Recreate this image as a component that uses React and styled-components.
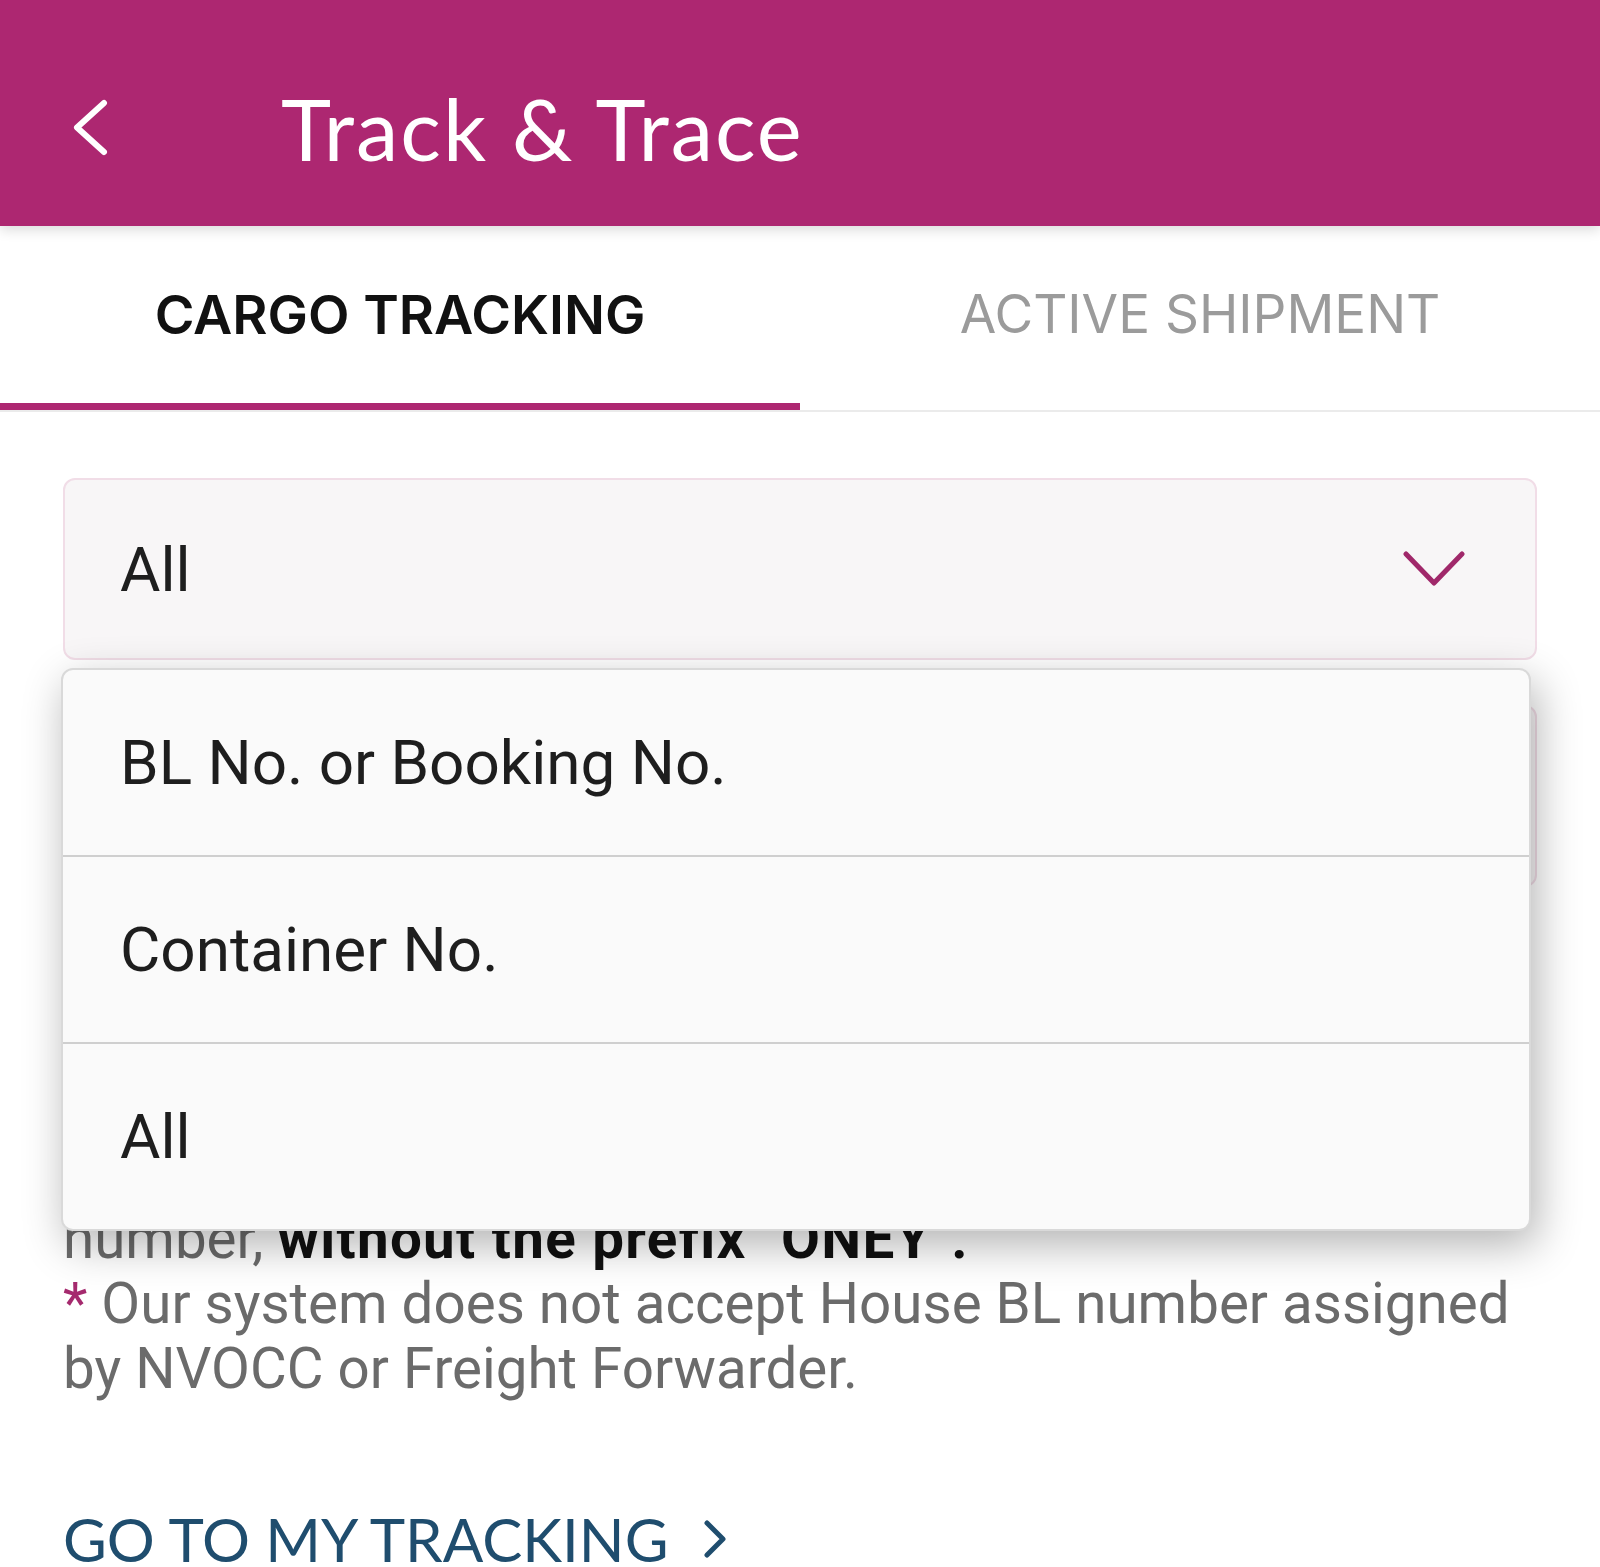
import React from 'react';
import styled, { createGlobalStyle } from 'styled-components';

const GlobalStyle = createGlobalStyle`
  html, body {
    margin: 0;
    padding: 0;
    background: #ffffff;
  }
  body {
    font-family: Roboto, "Liberation Sans", sans-serif;
  }
`;

const Page = styled.div`
  width: 1600px;
  height: 1567px;
  overflow: hidden;
  background: #ffffff;
`;

const Header = styled.header`
  position: relative;
  z-index: 2;
  height: 226px;
  box-sizing: border-box;
  padding: 86px 0 0 71px;
  display: flex;
  align-items: flex-start;
  background: #ad2771;
  box-shadow: 0 4px 12px rgba(0, 0, 0, 0.14);
`;

const BackButton = styled.button`
  width: 38px;
  height: 57px;
  margin-top: 13px;
  padding: 0;
  border: 0;
  background: none;
  display: flex;
`;

const Title = styled.h1`
  margin: 0 0 0 172px;
  font-family: Lato, "Liberation Sans", sans-serif;
  font-weight: 400;
  font-size: 85px;
  line-height: 85px;
  letter-spacing: 2px;
  color: #ffffff;
`;

const Tabs = styled.nav`
  display: flex;
  height: 186px;
  box-sizing: border-box;
  border-bottom: 2px solid #ebebeb;
`;

const Tab = styled.div`
  flex: 1;
  display: flex;
  align-items: center;
  justify-content: center;
  font-family: Inter, "Liberation Sans", sans-serif;
  font-size: ${props => (props.active ? 54 : 53)}px;
  line-height: 1;
  font-weight: ${props => (props.active ? 600 : 400)};
  color: ${props => (props.active ? '#111111' : '#9b9b9b')};
  border-bottom: 7px solid ${props => (props.active ? '#ad2771' : 'transparent')};
`;

const Content = styled.main`
  position: relative;
  padding: 66px 63px 0;
`;

const Field = styled.div`
  height: 182px;
  box-sizing: border-box;
  display: flex;
  align-items: center;
  justify-content: space-between;
  padding: 0 70px 0 55px;
  background: #f8f6f7;
  border: 2px solid #f1dde7;
  border-radius: 12px;
  margin-top: ${props => props.gap || 0}px;
  font-size: 62px;
  color: #1e1e1e;
`;

const Hint = styled.p`
  margin: 60px 0 0;
  font-size: 56.5px;
  line-height: 65px;
  color: #6b6b6b;
`;

const Strong = styled.b`
  font-weight: 700;
  letter-spacing: 1.3px;
  color: #111111;
`;

const Star = styled.span`
  color: #a52a6e;
`;

const MoreLink = styled.a`
  margin-top: 107px;
  display: flex;
  align-items: center;
  gap: 36px;
  font-family: Lato, "Liberation Sans", sans-serif;
  font-size: 60px;
  line-height: 60px;
  color: #1f4d6e;
  text-decoration: none;
`;

const Menu = styled.ul`
  position: absolute;
  top: 256px;
  left: 61px;
  width: 1470px;
  margin: 0;
  padding: 0;
  list-style: none;
  box-sizing: border-box;
  background: #fafafa;
  border: 2px solid #d9d9d9;
  border-radius: 12px;
  box-shadow: 6px 14px 44px rgba(0, 0, 0, 0.3);
  overflow: hidden;
`;

const MenuItem = styled.li`
  height: 185px;
  display: flex;
  align-items: center;
  padding-left: 57px;
  font-size: 62px;
  color: #1e1e1e;
  & + & {
    border-top: 2px solid #cfcfcf;
  }
`;

const ChevronLeft = () => (
  <svg width="38" height="57" viewBox="0 0 38 57" fill="none">
    <path d="M33 4 L6 28.5 L33 53" stroke="#ffffff" strokeWidth="6" strokeLinecap="round" strokeLinejoin="round" />
  </svg>
);

const ChevronDown = () => (
  <svg width="62" height="36" viewBox="0 0 62 36" fill="none">
    <path d="M3 3 L31 32 L59 3" stroke="#a0286a" strokeWidth="5" strokeLinecap="round" strokeLinejoin="round" />
  </svg>
);

const ChevronRight = () => (
  <svg width="22" height="38" viewBox="0 0 22 38" fill="none">
    <path d="M3 3 L19 19 L3 35" stroke="#1f4d6e" strokeWidth="5" strokeLinecap="round" strokeLinejoin="round" />
  </svg>
);

const options = ['BL No. or Booking No.', 'Container No.', 'All'];

export default function App() {
  return (
    <Page>
      <GlobalStyle />
      <Header>
        <BackButton aria-label="Back">
          <ChevronLeft />
        </BackButton>
        <Title>Track &amp; Trace</Title>
      </Header>
      <Tabs>
        <Tab active>CARGO TRACKING</Tab>
        <Tab>ACTIVE SHIPMENT</Tab>
      </Tabs>
      <Content>
        <Field>
          <span>All</span>
          <ChevronDown />
        </Field>
        <Field gap={45} />
        <Hint>
          <Star>*</Star> You can enter up to 20 numbers at once,<br />
          separated by a comma or a space.<br />
          <Star>*</Star> For BL No. please enter the 12-digit BL<br />
          number, for Booking No. the 12-digit booking<br />
          number, <Strong>without the prefix "ONEY".</Strong><br />
          <Star>*</Star> Our system does not accept House BL number assigned<br />
          by NVOCC or Freight Forwarder.
        </Hint>
        <MoreLink href="#">
          GO TO MY TRACKING
          <ChevronRight />
        </MoreLink>
        <Menu>
          {options.map(option => (
            <MenuItem key={option}>{option}</MenuItem>
          ))}
        </Menu>
      </Content>
    </Page>
  );
}
